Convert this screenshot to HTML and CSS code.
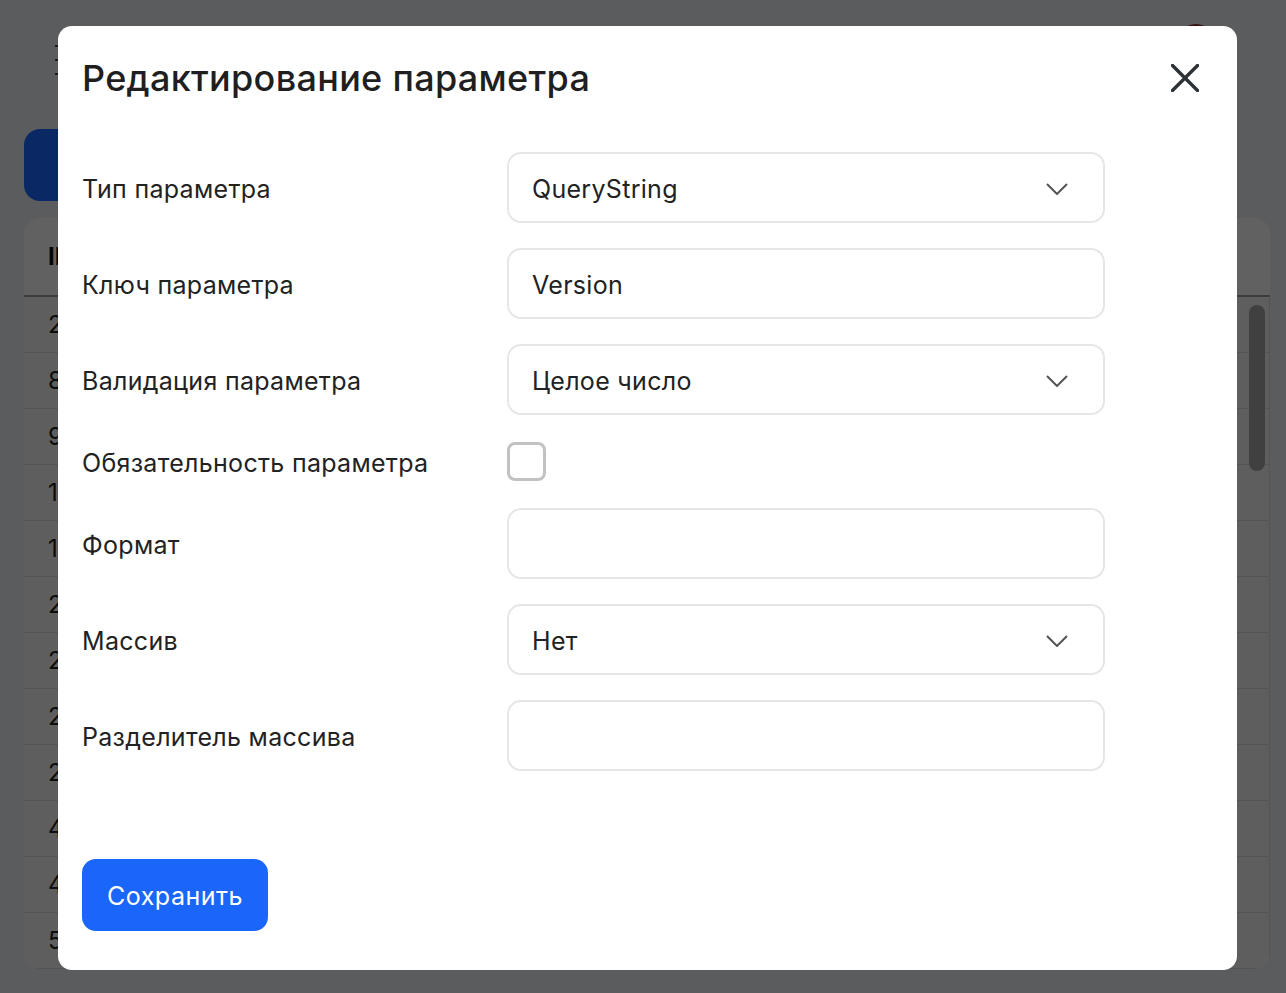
FILE: index.html
```html
<!DOCTYPE html>
<html lang="ru">
<head>
  <meta charset="UTF-8" />
  <meta name="viewport" content="width=device-width, initial-scale=1.0"/>
  <title>Редактирование параметра</title>
  <link rel="stylesheet" href="styles.css">
</head>
<body>

  <!-- page behind the dialog -->
  <div class="page">
    <div class="page-top">
      <div class="menu-icon"><span></span><span></span><span></span></div>
      <div class="avatar"></div>
    </div>
    <div class="add-button"></div>

    <div class="table-card">
      <div class="table-head">
        <div class="cell">ID</div>
        <div class="cell"></div>
        <div class="cell"></div>
      </div>
      <div class="table-body">
        <div class="row"><div class="cell">2</div><div class="cell"></div><div class="cell"></div></div>
        <div class="row"><div class="cell">8</div><div class="cell"></div><div class="cell"></div></div>
        <div class="row"><div class="cell">9</div><div class="cell"></div><div class="cell"></div></div>
        <div class="row"><div class="cell">1</div><div class="cell"></div><div class="cell"></div></div>
        <div class="row"><div class="cell">1</div><div class="cell"></div><div class="cell"></div></div>
        <div class="row"><div class="cell">2</div><div class="cell"></div><div class="cell"></div></div>
        <div class="row"><div class="cell">2</div><div class="cell"></div><div class="cell"></div></div>
        <div class="row"><div class="cell">2</div><div class="cell"></div><div class="cell"></div></div>
        <div class="row"><div class="cell">2</div><div class="cell"></div><div class="cell"></div></div>
        <div class="row"><div class="cell">4</div><div class="cell"></div><div class="cell"></div></div>
        <div class="row"><div class="cell">4</div><div class="cell"></div><div class="cell"></div></div>
        <div class="row"><div class="cell">5</div><div class="cell"></div><div class="cell"></div></div>
        <div class="scroll-thumb"></div>
      </div>
    </div>
  </div>

  <!-- dialog -->
  <div class="overlay">
    <div class="modal">
      <div class="modal-header">
        <h2 class="modal-title">Редактирование параметра</h2>
        <button class="close-button" aria-label="Закрыть">
          <svg width="28" height="28" viewBox="0 0 28 28">
            <path d="M1.5 1.5 L26.5 26.5 M26.5 1.5 L1.5 26.5" stroke="#2d3236" stroke-width="3.4" stroke-linecap="square" fill="none"/>
          </svg>
        </button>
      </div>

      <div class="form">
        <label class="label">Тип параметра</label>
        <div class="field select">
          <span>QueryString</span>
          <svg class="chevron" width="22" height="12" viewBox="0 0 22 12"><path d="M1 1 L11 11 L21 1" stroke="#555" stroke-width="2" fill="none"/></svg>
        </div>

        <label class="label">Ключ параметра</label>
        <div class="field"><span>Version</span></div>

        <label class="label">Валидация параметра</label>
        <div class="field select">
          <span>Целое число</span>
          <svg class="chevron" width="22" height="12" viewBox="0 0 22 12"><path d="M1 1 L11 11 L21 1" stroke="#555" stroke-width="2" fill="none"/></svg>
        </div>

        <label class="label">Обязательность параметра</label>
        <div class="check-cell"><div class="checkbox"></div></div>

        <label class="label">Формат</label>
        <div class="field"></div>

        <label class="label">Массив</label>
        <div class="field select">
          <span>Нет</span>
          <svg class="chevron" width="22" height="12" viewBox="0 0 22 12"><path d="M1 1 L11 11 L21 1" stroke="#555" stroke-width="2" fill="none"/></svg>
        </div>

        <label class="label">Разделитель массива</label>
        <div class="field"></div>
      </div>

      <button class="save-button">Сохранить</button>
    </div>
  </div>

</body>
</html>
```

FILE: styles.css
```css
* {
  box-sizing: border-box;
  margin: 0;
  padding: 0;
  font-family: Inter, 'Noto Sans', sans-serif;
}

body {
  background: #e4e6ea;
  overflow: hidden;
  height: 993px;
}

/* page behind */
.page {
  padding: 0 24px;
}

.page-top {
  display: flex;
  justify-content: space-between;
  align-items: flex-start;
  height: 129px;
  padding-top: 45px;
  padding-left: 31px;
}

.menu-icon {
  display: flex;
  flex-direction: column;
  gap: 12px;
  width: 30px;
}

.menu-icon span {
  display: block;
  height: 2px;
  background: #444;
}

.avatar {
  width: 40px;
  height: 40px;
  border-radius: 50%;
  background: #8a2a2a;
  margin-top: -21px;
  margin-right: 46px;
}

.add-button {
  height: 72px;
  width: 280px;
  border-radius: 16px;
  background: #1a66fa;
}

.table-card {
  margin-top: 17px;
  width: 1246px;
  background: #f2f2f2;
  border-radius: 16px;
  overflow: hidden;
}

.table-head,
.row {
  display: grid;
  grid-template-columns: 238px 638px 1fr;
}

.table-head {
  height: 79px;
  align-items: center;
  border-bottom: 2px solid #9a9a9a;
  font-weight: 700;
  font-size: 24px;
  color: #111;
}

.table-body {
  position: relative;
  background: #ebebeb;
}

.row {
  height: 56px;
  border-bottom: 1px solid #d2d2d2;
  font-size: 24px;
  color: #222;
}

.row .cell {
  display: flex;
  align-items: center;
  border-right: 1px solid #d2d2d2;
}

.cell {
  padding-left: 24px;
}

.scroll-thumb {
  position: absolute;
  right: 5px;
  top: 8px;
  width: 16px;
  height: 166px;
  border-radius: 8px;
  background: #a0a0a0;
}

/* dialog */
.overlay {
  position: fixed;
  inset: 0;
  background: rgba(0, 0, 0, 0.6);
}

.modal {
  position: absolute;
  left: 58px;
  top: 26px;
  width: 1179px;
  background: #fff;
  border-radius: 14px;
  padding: 30px 24px 39px;
}

.modal-header {
  display: flex;
  justify-content: space-between;
  align-items: center;
  height: 43px;
}

.modal-title {
  font-size: 36px;
  font-weight: 500;
  color: #1f1f1f;
  letter-spacing: 0.3px;
}

.close-button {
  border: none;
  background: none;
  width: 28px;
  height: 28px;
  margin-right: 14px;
  cursor: pointer;
}

.close-button svg {
  display: block;
}

.form {
  display: grid;
  grid-template-columns: 425px 598px;
  grid-template-rows: 71px 71px 71px 43px 71px 71px 71px;
  row-gap: 25px;
  margin-top: 53px;
  margin-bottom: 88px;
}

.label {
  display: flex;
  align-items: center;
  padding-top: 2px;
  font-size: 25px;
  letter-spacing: 0.3px;
  color: #222;
}

.field {
  display: flex;
  align-items: center;
  justify-content: space-between;
  border: 2px solid #e6e6e6;
  border-radius: 14px;
  padding: 2px 35px 0 23px;
  font-size: 25px;
  letter-spacing: 0.3px;
  color: #222;
}

.chevron {
  display: block;
}

.check-cell {
  display: flex;
  align-items: center;
}

.checkbox {
  width: 39px;
  height: 39px;
  border: 3px solid #c2c2c2;
  border-radius: 8px;
}

.save-button {
  display: block;
  height: 72px;
  padding: 2px 25px 0;
  border: none;
  border-radius: 14px;
  background: #1a66fa;
  color: white;
  font-size: 25px;
  letter-spacing: 0.5px;
  cursor: pointer;
}
```
